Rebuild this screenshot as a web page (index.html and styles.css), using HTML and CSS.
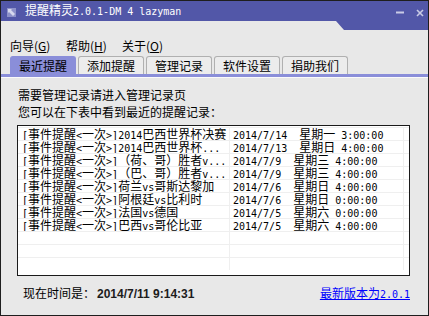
FILE: index.html
```html
<!DOCTYPE html>
<html lang="zh-CN">
<head>
    <meta charset="UTF-8">
    <meta name="viewport" content="width=device-width, initial-scale=1.0">
    <title>提醒精灵</title>
    <link rel="stylesheet" href="styles.css">
</head>
<body>
    <div class="window">
        <!-- Title Bar -->
        <div class="titlebar">
            <div class="title-row">
                <svg class="app-icon" width="9" height="9" viewBox="0 0 9 9">
                    <rect x="0" y="0" width="9" height="9" fill="#8d91c9"/>
                    <polygon points="1,1 5,1 4,2 8,6 6,8 2,4 1,5" fill="#d6d8ee"/>
                </svg>
                <span class="title">提醒精灵<span class="en">2.0.1-DM 4 lazyman</span></span>
                <svg class="win-btns" width="28" height="20" viewBox="0 0 28 20">
                    <line x1="0" y1="11.5" x2="8" y2="11.5" stroke="#c9cbe6" stroke-width="2"/>
                    <line x1="21" y1="9" x2="27" y2="15" stroke="#c9cbe6" stroke-width="1.6"/>
                    <line x1="27" y1="9" x2="21" y2="15" stroke="#c9cbe6" stroke-width="1.6"/>
                </svg>
            </div>
        </div>

        <!-- Menu -->
        <div class="menubar">
            <span class="menu">向导(<u>G</u>)</span>
            <span class="menu">帮助(<u>H</u>)</span>
            <span class="menu">关于(<u>O</u>)</span>
        </div>

        <!-- Tabs -->
        <div class="tabs">
            <div class="tab active">最近提醒</div>
            <div class="tab">添加提醒</div>
            <div class="tab">管理记录</div>
            <div class="tab">软件设置</div>
            <div class="tab">捐助我们</div>
        </div>
        <div class="tab-line"></div>

        <div class="panel">
            <p class="hint">需要管理记录请进入管理记录页</p>
            <p class="hint">您可以在下表中看到最近的提醒记录：</p>

            <!-- Recent reminders -->
            <div class="list">
                <div class="row">
                    <div class="cell c1"><span class="en">[</span>事件提醒<span class="en">&lt;</span>一次<span class="en">&gt;]2014</span>巴西世界杯决赛</div>
                    <div class="cell c2"><span class="en">2014/7/14  </span>星期一<span class="en"> 3:00:00</span></div>
                    <div class="cell c3"></div>
                </div>
                <div class="row">
                    <div class="cell c1"><span class="en">[</span>事件提醒<span class="en">&lt;</span>一次<span class="en">&gt;]2014</span>巴西世界杯<span class="en">...</span></div>
                    <div class="cell c2"><span class="en">2014/7/13  </span>星期日<span class="en"> 4:00:00</span></div>
                    <div class="cell c3"></div>
                </div>
                <div class="row">
                    <div class="cell c1"><span class="en">[</span>事件提醒<span class="en">&lt;</span>一次<span class="en">&gt;]</span>（荷、哥）胜者<span class="en">v...</span></div>
                    <div class="cell c2"><span class="en">2014/7/9  </span>星期三<span class="en"> 4:00:00</span></div>
                    <div class="cell c3"></div>
                </div>
                <div class="row">
                    <div class="cell c1"><span class="en">[</span>事件提醒<span class="en">&lt;</span>一次<span class="en">&gt;]</span>（巴、哥）胜者<span class="en">v...</span></div>
                    <div class="cell c2"><span class="en">2014/7/9  </span>星期三<span class="en"> 4:00:00</span></div>
                    <div class="cell c3"></div>
                </div>
                <div class="row">
                    <div class="cell c1"><span class="en">[</span>事件提醒<span class="en">&lt;</span>一次<span class="en">&gt;]</span>荷兰<span class="en">vs</span>哥斯达黎加</div>
                    <div class="cell c2"><span class="en">2014/7/6  </span>星期日<span class="en"> 4:00:00</span></div>
                    <div class="cell c3"></div>
                </div>
                <div class="row">
                    <div class="cell c1"><span class="en">[</span>事件提醒<span class="en">&lt;</span>一次<span class="en">&gt;]</span>阿根廷<span class="en">vs</span>比利时</div>
                    <div class="cell c2"><span class="en">2014/7/6  </span>星期日<span class="en"> 0:00:00</span></div>
                    <div class="cell c3"></div>
                </div>
                <div class="row">
                    <div class="cell c1"><span class="en">[</span>事件提醒<span class="en">&lt;</span>一次<span class="en">&gt;]</span>法国<span class="en">vs</span>德国</div>
                    <div class="cell c2"><span class="en">2014/7/5  </span>星期六<span class="en"> 0:00:00</span></div>
                    <div class="cell c3"></div>
                </div>
                <div class="row">
                    <div class="cell c1"><span class="en">[</span>事件提醒<span class="en">&lt;</span>一次<span class="en">&gt;]</span>巴西<span class="en">vs</span>哥伦比亚</div>
                    <div class="cell c2"><span class="en">2014/7/5  </span>星期六<span class="en"> 4:00:00</span></div>
                    <div class="cell c3"></div>
                </div>
                <!-- empty rows -->
                <div class="row"><div class="cell c1"></div><div class="cell c2"></div><div class="cell c3"></div></div>
                <div class="row"><div class="cell c1"></div><div class="cell c2"></div><div class="cell c3"></div></div>
                <div class="row"><div class="cell c1"></div><div class="cell c2"></div><div class="cell c3"></div></div>
            </div>

            <!-- Footer -->
            <div class="footer">
                <span class="now">现在时间是：<strong class="clock">2014/7/11 9:14:31</strong></span>
                <a href="#" class="update">最新版本为<span class="en">2.0.1</span></a>
            </div>
        </div>
    </div>
</body>
</html>
```

FILE: styles.css
```css
* {
    box-sizing: border-box;
}

body {
    margin: 0;
    background: #e8e8e8;
    font-family: "Noto Sans CJK SC", sans-serif;
    font-size: 12px;
    color: #000;
}

.en {
    font-family: "DejaVu Sans Mono", monospace;
    font-size: 10px;
}

.window {
    width: 429px;
    height: 316px;
    border: 1px solid #1e1e1e;
    background: #e8e8e8;
    overflow: hidden;
}

/* title bar with the notch on the right */
.titlebar {
    height: 29px;
    background: #5257a8;
    clip-path: polygon(0 0, 100% 0, 100% 29px, 343px 29px, 335px 20px, 0 20px);
}

.title-row {
    display: flex;
    align-items: center;
    height: 20px;
    padding-left: 6px;
    padding-right: 4px;
}

.app-icon {
    margin-right: 9px;
    margin-top: 2px;
}

.title {
    color: #fff;
    line-height: 20px;
    white-space: pre;
}

.win-btns {
    margin-left: auto;
}

.menubar {
    display: flex;
    padding: 6px 0 0 9px;
    height: 26px;
    line-height: 20px;
}

.menu {
    width: 56px;
}

.tabs {
    display: flex;
    gap: 2px;
    padding-left: 9px;
    height: 18px;
}

.tab {
    width: 66px;
    height: 18px;
    line-height: 17px;
    text-align: center;
    background: #ececec;
    border: 1px solid #b0b0b0;
    border-bottom: none;
    border-radius: 3px 3px 0 0;
}

.tab.active {
    background: #8a8ed9;
    border-color: #8a8ed9;
}

.tab-line {
    height: 3px;
    background: #8a8ed9;
    border-bottom: 1px solid #fafafa;
    box-sizing: content-box;
}

.panel {
    padding: 8px 0 0 16px;
}

.hint {
    margin: 0;
    padding-left: 1px;
    line-height: 17px;
}

.list {
    margin-top: 5px;
    width: 393px;
    height: 151px;
    border: 1px solid #1a1a1a;
    background: #fff;
    padding-top: 1px;
    overflow: hidden;
}

/* grid line drawn as a background so the text keeps the full row height */
.row {
    display: flex;
    height: 13px;
    background: linear-gradient(#efefef, #efefef) top / 100% 1px no-repeat;
}

.cell {
    height: 13px;
    line-height: 14px;
    white-space: pre;
    overflow: hidden;
    border-right: 1px solid #efefef;
}

.c1 {
    width: 212px;
    padding-left: 4px;
}

.c2 {
    width: 174px;
    padding-left: 3px;
}

.c3 {
    flex: 1;
    border-right: none;
}

.footer {
    display: flex;
    justify-content: space-between;
    width: 393px;
    margin-top: 10px;
    line-height: 14px;
    padding-left: 6px;
}

.clock {
    font-family: "Liberation Sans", Arial, sans-serif;
    font-weight: bold;
    color: #1c1c1c;
    margin-left: 2px;
}

.update {
    color: #0000ff;
    text-decoration: underline;
}
```
